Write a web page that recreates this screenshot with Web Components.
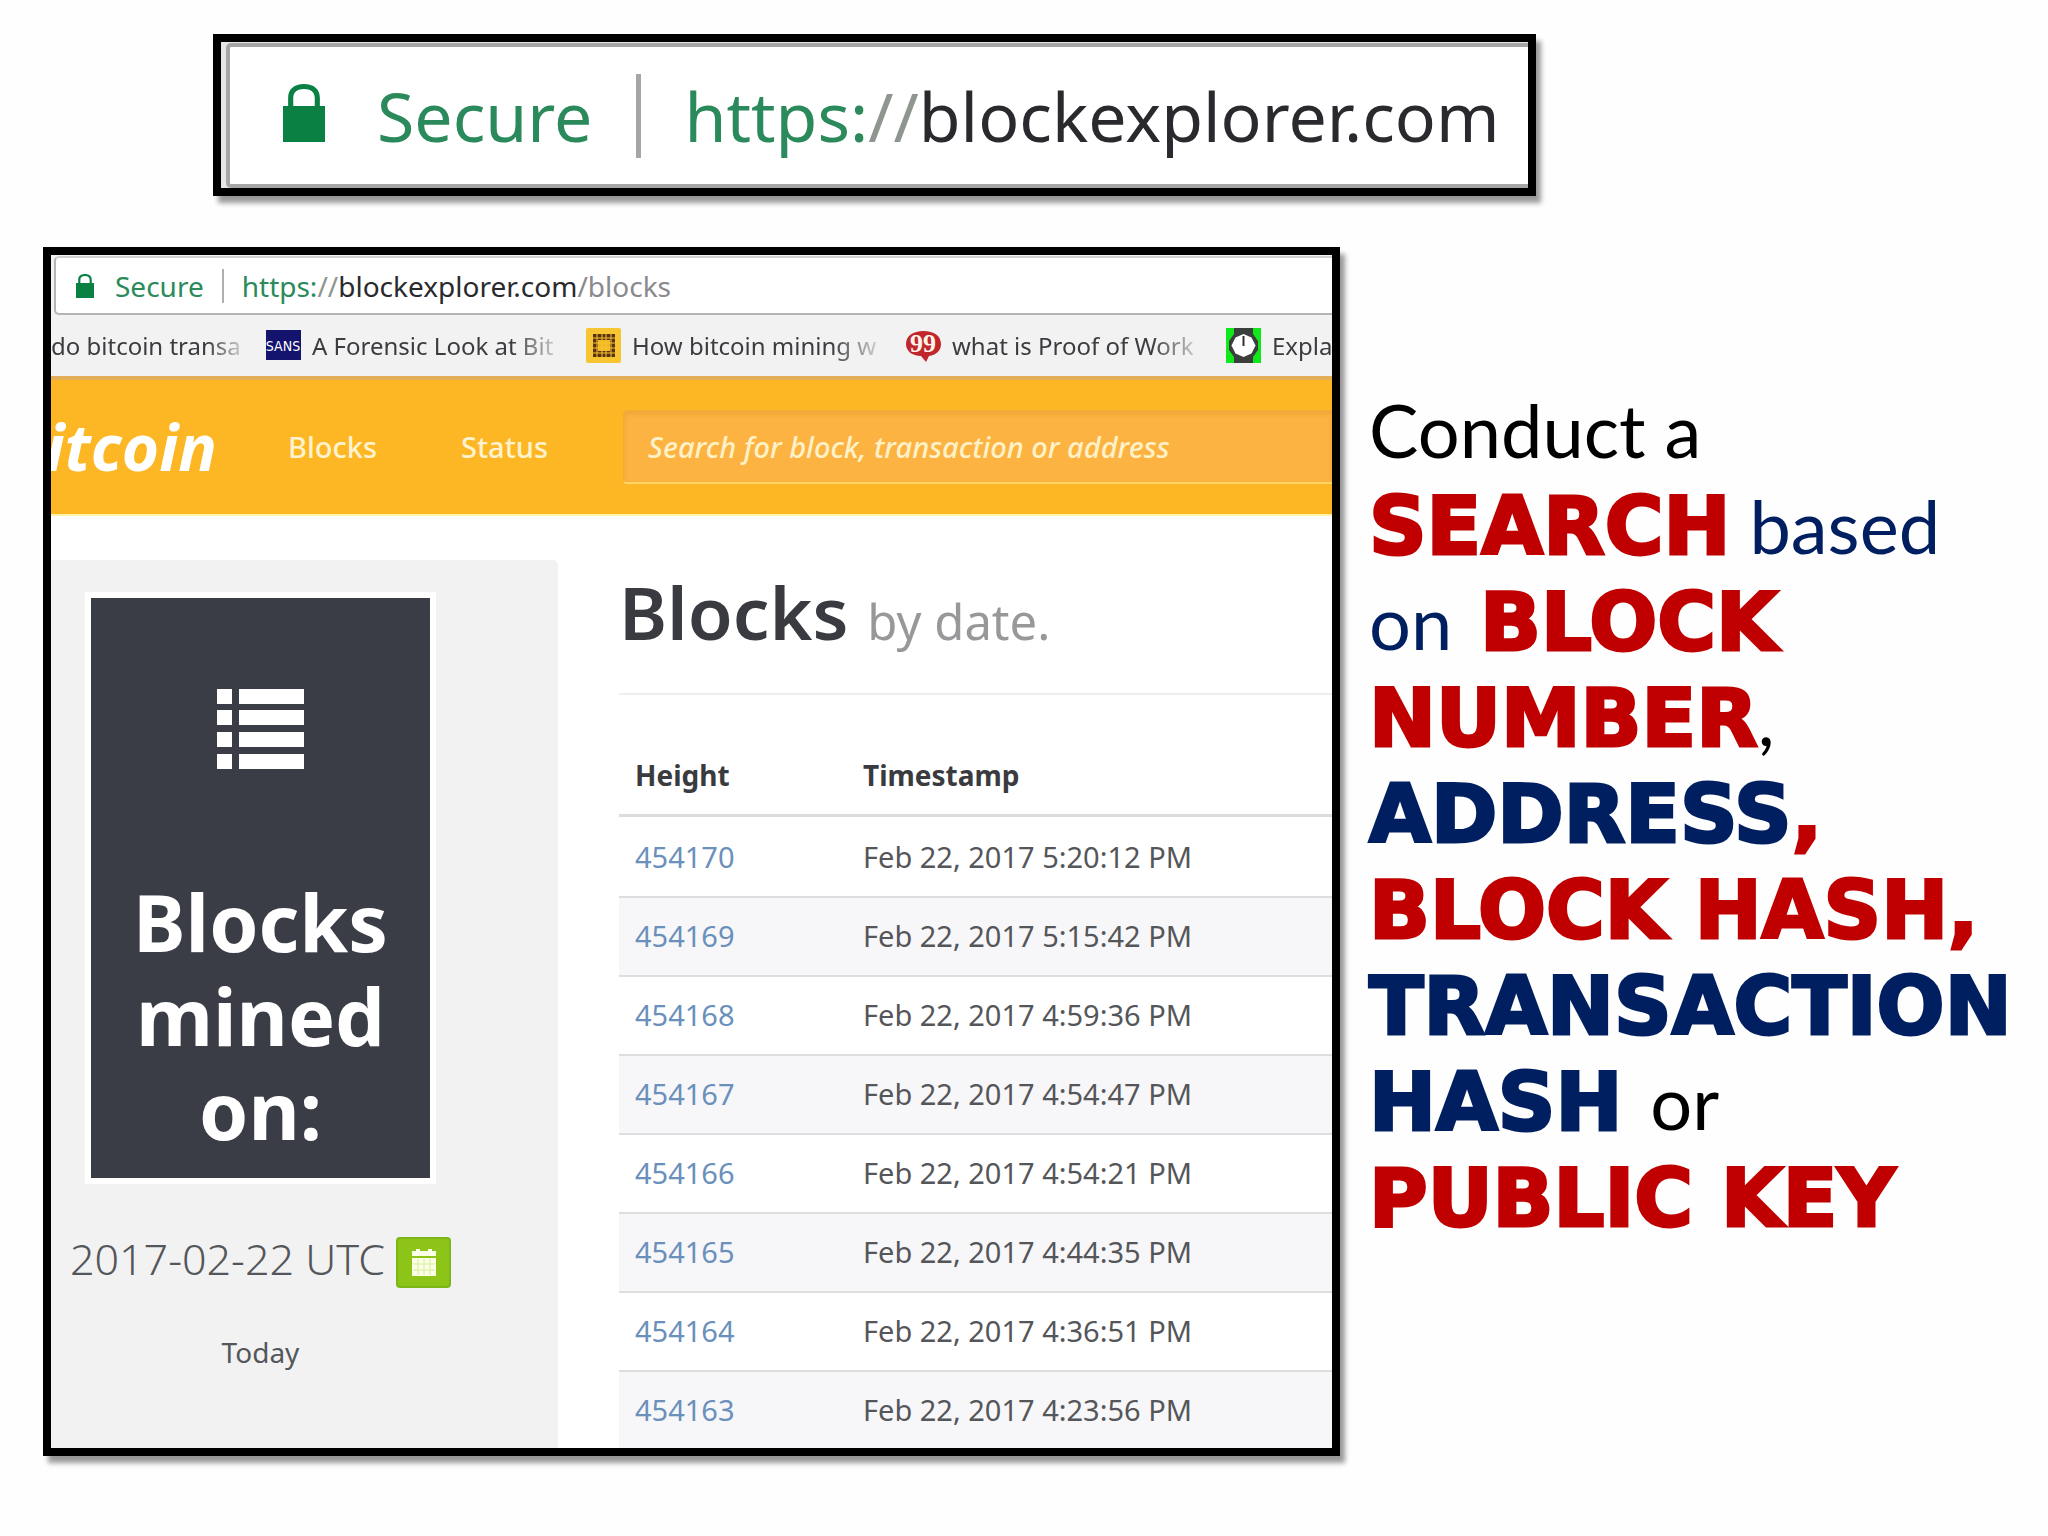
<!DOCTYPE html>
<html lang="en">
<head>
<meta charset="utf-8">
<meta name="viewport" content="width=device-width, initial-scale=1">
<title>Block Explorer</title>
<style>
  body {
    margin: 0;
    background: #fefefe;
    color: #3a3b3f;
    font-family: "Noto Sans", "Open Sans", sans-serif;
  }
</style>
</head>
<body>
<explorer-slide>
  <picture-frame slot="address">
    <address-bar size="large" host="blockexplorer.com"></address-bar>
  </picture-frame>
  <picture-frame slot="window">
    <address-bar host="blockexplorer.com" path="/blocks"></address-bar>
    <bookmarks-bar></bookmarks-bar>
    <site-navbar></site-navbar>
    <blocks-page></blocks-page>
  </picture-frame>
  <search-notes slot="notes"></search-notes>
</explorer-slide>

<script>
class ExplorerSlide extends HTMLElement {
  connectedCallback() {
    this.attachShadow({ mode: 'open' });
    this.shadowRoot.innerHTML = `
      <style>
        :host {
          display: block;
          padding: 34px 0 34px 43px;
        }
        header {
          width: 66%;
          margin-left: 170px;
        }
        main {
          display: grid;
          grid-template-columns: minmax(0, 1297fr) minmax(0, 679fr);
          gap: 29px;
          align-items: start;
          margin-top: 51px;
        }
      </style>
      <header><slot name="address"></slot></header>
      <main>
        <slot name="window"></slot>
        <slot name="notes"></slot>
      </main>
    `;
  }
}
customElements.define('explorer-slide', ExplorerSlide);

class PictureFrame extends HTMLElement {
  connectedCallback() {
    this.attachShadow({ mode: 'open' });
    this.shadowRoot.innerHTML = `
      <style>
        :host {
          display: block;
          overflow: hidden;
          border: 8px solid #000;
          background: #fff;
          box-shadow: 5px 7px 5px rgba(0, 0, 0, 0.4);
        }
        :host([slot="window"]) {
          box-sizing: border-box;
          aspect-ratio: 162 / 151;
        }
      </style>
      <slot></slot>
    `;
  }
}
customElements.define('picture-frame', PictureFrame);

class AddressBar extends HTMLElement {
  connectedCallback() {
    const host = this.getAttribute('host');
    const path = this.getAttribute('path') || '';
    this.attachShadow({ mode: 'open' });
    this.shadowRoot.innerHTML = `
      <style>
        :host {
          display: block;
          padding: 1px 0 0 3px;
          background: #f2f2f2;
        }
        .bar {
          display: flex;
          align-items: center;
          height: 55px;
          padding-left: 20px;
          border: 2px solid #b4b4b6;
          border-right: 0;
          border-top-color: #d0d0d0;
          border-radius: 5px 0 0 5px;
          background: #fff;
          font-size: 28px;
          line-height: 38px;
          white-space: nowrap;
        }
        svg {
          width: 18px;
          height: 24px;
          fill: #0b8043;
        }
        .secure {
          margin-left: 21px;
          color: #2b8a5b;
        }
        .divider {
          width: 2px;
          height: 34px;
          margin: 0 18px 0 18px;
          background: #b0b0b0;
        }
        .scheme { color: #2b8a5b; }
        .slashes { color: #8f9690; }
        .host { color: #2a2a2e; }
        .path { color: #8a8a8e; }

        :host([size="large"]) {
          padding: 1px 0 0 5px;
          background: #e6e6e6;
        }
        :host([size="large"]) .bar {
          height: 137px;
          padding-left: 53px;
          border: 4px solid #a6a6a6;
          border-right: 0;
          font-size: 68px;
          line-height: 92px;
        }
        :host([size="large"]) svg {
          width: 42px;
          height: 58px;
          margin-bottom: 6px;
        }
        :host([size="large"]) .secure { margin-left: 52px; }
        :host([size="large"]) .divider {
          width: 5px;
          height: 84px;
          margin: 0 43px 0 44px;
          background: #a6a6a6;
        }
      </style>
      <div class="bar">
        <svg viewBox="0 0 41 58" preserveAspectRatio="none" aria-hidden="true">
          <path d="M0 22h5V14C5 5 11 0 20.500 0S36 5 36 14v8h5v36H0zM10 22h21V14c0-6-4-9-10.500-9S10 8 10 14z" fill-rule="evenodd"/>
        </svg>
        <span class="secure">Secure</span>
        <span class="divider"></span>
        <span class="url"><span class="scheme">https:</span><span class="slashes">//</span><span class="host">${host}</span><span class="path">${path}</span></span>
      </div>
    `;
  }
}
customElements.define('address-bar', AddressBar);

class BookmarksBar extends HTMLElement {
  connectedCallback() {
    this.attachShadow({ mode: 'open' });
    this.shadowRoot.innerHTML = `
      <style>
        :host {
          display: block;
          overflow: hidden;
          background: #f2f2f3;
          border-bottom: 4px solid #e2ae58;
        }
        nav {
          display: flex;
          height: 61px;
        }
        a {
          display: flex;
          flex: 0 0 320px;
          align-items: center;
          gap: 11px;
          color: #3c3c40;
          font-size: 24px;
          line-height: 34px;
          text-decoration: none;
          white-space: nowrap;
        }
        a:first-child { flex-basis: 215px; }
        span {
          width: 250px;
          -webkit-mask-image: linear-gradient(90deg, #000 80%, rgba(0, 0, 0, 0.1));
          mask-image: linear-gradient(90deg, #000 80%, rgba(0, 0, 0, 0.1));
        }
        a:first-child span { width: 195px; }
        svg {
          flex: none;
          width: 35px;
          height: 35px;
        }
      </style>
      <nav>
        <a href="#"><span>do bitcoin transa</span></a>
        <a href="#">
          <svg viewBox="0 0 35 35">
            <rect y="2" width="35" height="30" fill="#14146e"/>
            <text x="17" y="23" text-anchor="middle" font-family="DejaVu Sans Condensed, DejaVu Sans" font-size="14" fill="#fff">SANS</text>
          </svg>
          <span>A Forensic Look at Bit</span>
        </a>
        <a href="#">
          <svg viewBox="0 0 35 35">
            <rect width="35" height="35" rx="2" fill="#f6c531"/>
            <path d="M7 6h22v23H7z" fill="#5a3210"/>
            <path d="M12 12h12v11H12z" fill="#f2b824"/>
            <path d="M7 10h22M7 15h22M7 20h22M7 25h22M11 6v23M16 6v23M20 6v23M25 6v23" stroke="#f6c531" stroke-width="1"/>
          </svg>
          <span>How bitcoin mining w</span>
        </a>
        <a href="#">
          <svg viewBox="0 0 35 35">
            <path d="M17.500 3C28 3 35 8 35 16c0 7-5 11-12 12l-3 6-5-6C6 28 0 23 0 16 0 8 7 3 17.500 3z" fill="#c0272d"/>
            <text x="17" y="24" text-anchor="middle" font-family="Liberation Serif, serif" font-weight="bold" font-size="26" fill="#fff4ea">99</text>
          </svg>
          <span>what is Proof of Work</span>
        </a>
        <a href="#">
          <svg viewBox="0 0 35 35">
            <rect width="35" height="35" fill="#10e81c"/>
            <path d="M8 0h19v6l5 7v9l-5 7v6H8v-6l-5-7v-9l5-7z" fill="#3b3f3c"/>
            <path d="M17.500 6l8 3.500 4 8-4 8-8 3.500-8-3.500-4-8 4-8z" fill="#fff"/>
            <path d="M17.500 8v10" stroke="#333" stroke-width="2"/>
          </svg>
          <span>Expla</span>
        </a>
      </nav>
    `;
  }
}
customElements.define('bookmarks-bar', BookmarksBar);

class SiteNavbar extends HTMLElement {
  connectedCallback() {
    this.attachShadow({ mode: 'open' });
    this.shadowRoot.innerHTML = `
      <style>
        :host {
          display: block;
          background: #fdb724;
          border-bottom: 2px solid #fff3a8;
        }
        nav {
          display: flex;
          align-items: center;
          height: 134px;
        }
        a {
          color: #fff3cf;
          font-size: 29px;
          font-weight: 500;
          line-height: 38px;
          text-decoration: none;
        }
        .logo {
          width: 166px;
          display: flex;
          justify-content: flex-end;
          color: #fff;
          font-size: 64px;
          font-style: italic;
          font-weight: 700;
          line-height: 84px;
        }
        .blocks { margin-left: 71px; }
        .status { margin-left: 84px; }
        form {
          flex: 1;
          margin-left: 75px;
        }
        input {
          box-sizing: border-box;
          display: block;
          width: 100%;
          height: 74px;
          padding: 0 24px;
          border: 1px solid #f4ad34;
          border-right: 0;
          border-bottom: 2px solid #ffd566;
          border-radius: 4px 0 0 4px;
          background: #fcb341;
          box-shadow: inset 0 3px 4px rgba(190, 110, 20, 0.2);
          color: #fff;
          font: italic 500 29px/38px "Noto Sans", "Open Sans", sans-serif;
        }
        input::placeholder {
          color: #fff1c8;
          opacity: 1;
        }
      </style>
      <nav>
        <a href="#" class="logo">itcoin</a>
        <a href="#blocks" class="blocks">Blocks</a>
        <a href="#status" class="status">Status</a>
        <form>
          <input type="text" aria-label="Search" placeholder="Search for block, transaction or address">
        </form>
      </nav>
    `;
  }
}
customElements.define('site-navbar', SiteNavbar);

class BlocksPage extends HTMLElement {
  connectedCallback() {
    this.attachShadow({ mode: 'open' });
    this.shadowRoot.innerHTML = `
      <style>
        :host {
          display: grid;
          grid-template-columns: 507px minmax(0, 1fr);
          gap: 61px;
        }
      </style>
      <mined-card></mined-card>
      <blocks-table></blocks-table>
    `;
  }
}
customElements.define('blocks-page', BlocksPage);

class MinedCard extends HTMLElement {
  connectedCallback() {
    this.attachShadow({ mode: 'open' });
    this.shadowRoot.innerHTML = `
      <style>
        :host {
          display: flex;
          flex-direction: column;
          align-items: center;
          margin-top: 44px;
          padding: 32px 88px 120px 0;
          border-radius: 0 5px 0 0;
          background: #f2f2f3;
        }
        .card {
          box-sizing: border-box;
          width: 351px;
          padding: 91px 40px 21px;
          border: 6px solid #fff;
          background: #3a3d45;
          text-align: center;
        }
        .card svg {
          display: block;
          width: 87px;
          height: 80px;
          margin: 0 auto 106px;
          fill: #fff;
        }
        h2 {
          margin: 0;
          color: #fff;
          font-size: 79px;
          font-weight: 700;
          line-height: 94px;
        }
        .date {
          display: flex;
          align-items: flex-start;
          gap: 11px;
          margin-top: 53px;
          color: #55565a;
          font-size: 43px;
          font-weight: 300;
          line-height: 44px;
          white-space: nowrap;
        }
        button {
          display: flex;
          align-items: center;
          justify-content: center;
          width: 55px;
          height: 51px;
          padding: 0;
          border: 2px solid #7cb518;
          border-radius: 4px;
          background: #8dc418;
        }
        button svg {
          width: 28px;
          height: 28px;
        }
        .today {
          margin: 45px 0 0;
          color: #55565a;
          font-size: 28px;
          line-height: 38px;
        }
      </style>
      <div class="card">
        <svg viewBox="0 0 87 80">
          <path d="M0 0h15v15H0zM0 21h15v15H0zM0 43h15v15H0zM0 65h15v15H0zM22 0h65v15H22zM22 21h65v15H22zM22 43h65v15H22zM22 65h65v15H22z"/>
        </svg>
        <h2>Blocks mined on:</h2>
      </div>
      <div class="date">
        <span>2017-02-22 UTC</span>
        <button type="button" aria-label="Choose date">
          <svg viewBox="0 0 28 28">
            <path d="M2 2h4V0h4v2h8V0h4v2h4v5H2zM2 9h24v18H2z" fill="#fbffe6"/>
            <path d="M3 15h22M3 21h22M8 10v16M14 10v16M20 10v16" stroke="#d8ec9a" stroke-width="1"/>
          </svg>
        </button>
      </div>
      <p class="today">Today</p>
    `;
  }
}
customElements.define('mined-card', MinedCard);

class BlocksTable extends HTMLElement {
  connectedCallback() {
    const blocks = [
      ['454170', 'Feb 22, 2017 5:20:12 PM'],
      ['454169', 'Feb 22, 2017 5:15:42 PM'],
      ['454168', 'Feb 22, 2017 4:59:36 PM'],
      ['454167', 'Feb 22, 2017 4:54:47 PM'],
      ['454166', 'Feb 22, 2017 4:54:21 PM'],
      ['454165', 'Feb 22, 2017 4:44:35 PM'],
      ['454164', 'Feb 22, 2017 4:36:51 PM'],
      ['454163', 'Feb 22, 2017 4:23:56 PM']
    ];
    this.attachShadow({ mode: 'open' });
    this.shadowRoot.innerHTML = `
      <style>
        :host {
          display: block;
          padding-top: 48px;
        }
        h1 {
          margin: 0;
          padding-bottom: 24px;
          border-bottom: 2px solid #eeeeef;
          color: #393b40;
          font-size: 73px;
          font-weight: 600;
          line-height: 96px;
        }
        small {
          color: #98989b;
          font-size: 49px;
          font-weight: 400;
        }
        table {
          width: 100%;
          margin-top: 61px;
          border-collapse: separate;
          border-spacing: 0;
          text-align: left;
        }
        th {
          padding: 0 0 20px;
          border-bottom: 3px solid #dcdcde;
          font-size: 28px;
          font-weight: 700;
          line-height: 38px;
        }
        td {
          padding: 18px 0 20px;
          border-top: 2px solid #dededf;
          color: #55565a;
          font-size: 29px;
          line-height: 39px;
        }
        th:first-child, td:first-child {
          width: 228px;
          padding-left: 16px;
        }
        tbody tr:first-child td { border-top-color: #fff; }
        tbody tr:nth-child(even) { background: #f7f7f9; }
        a {
          color: #6a90bb;
          text-decoration: none;
        }
      </style>
      <h1>Blocks <small>by date.</small></h1>
      <table>
        <thead>
          <tr><th>Height</th><th>Timestamp</th></tr>
        </thead>
        <tbody>
          ${blocks.map(([height, time]) => `<tr><td><a href="#${height}">${height}</a></td><td>${time}</td></tr>`).join('')}
        </tbody>
      </table>
    `;
  }
}
customElements.define('blocks-table', BlocksTable);

class SearchNotes extends HTMLElement {
  connectedCallback() {
    this.attachShadow({ mode: 'open' });
    this.shadowRoot.innerHTML = `
      <style>
        :host {
          display: block;
          padding-top: 135px;
        }
        p {
          margin: 0;
          color: #000;
          font-family: Lato, sans-serif;
          font-size: 74px;
          line-height: 96px;
          white-space: nowrap;
        }
        span { color: #001f60; }
        b {
          color: #c00000;
          font-family: "DejaVu Sans", sans-serif;
          font-size: 80px;
          font-weight: 700;
          line-height: 80px;
          -webkit-text-stroke: 3px currentColor;
        }
        .navy { color: #001f60; }
      </style>
      <p>
        Conduct a<br>
        <b>SEARCH</b> <span>based</span><br>
        <span>on</span><b> BLOCK</b><br>
        <b>NUMBER</b>,<br>
        <b class="navy">ADDRESS</b><b>,</b><br>
        <b>BLOCK HASH,</b><br>
        <b class="navy">TRANSACTION</b><br>
        <b class="navy">HASH </b>or<br>
        <b>PUBLIC KEY</b>
      </p>
    `;
  }
}
customElements.define('search-notes', SearchNotes);
</script>
</body>
</html>
